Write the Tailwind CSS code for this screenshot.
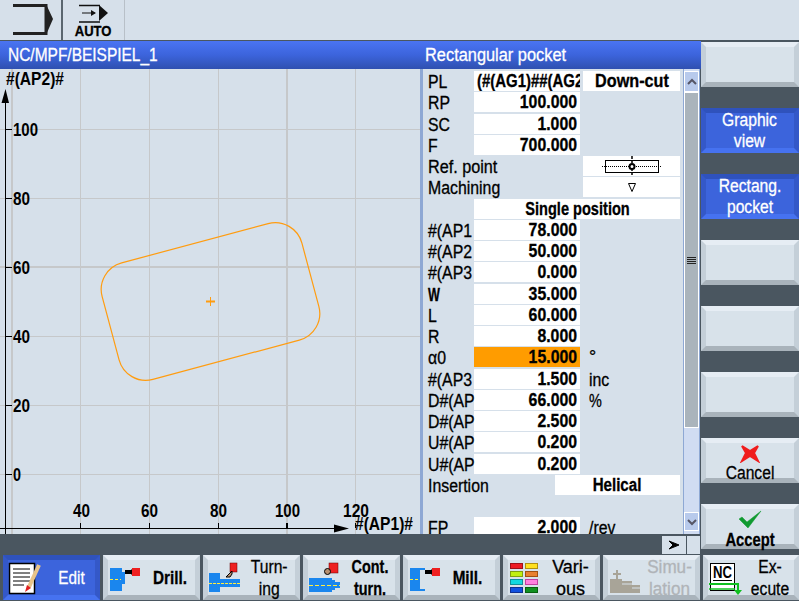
<!DOCTYPE html>
<html lang="en">
<head>
  <meta charset="UTF-8" />
  <title>Rectangular pocket</title>
  <script src="https://cdn.jsdelivr.net/npm/@tailwindcss/browser@4"></script>
</head>
<body class="w-[799px] h-[601px] overflow-hidden bg-[#4a5660] text-black text-[18px] leading-[20px] font-['Liberation_Sans',sans-serif] [-webkit-text-stroke:0.3px]">

  <!-- top bar -->
  <div class="h-[41px] flex bg-[#d6e0ea] border-b border-[#4a5660]">
    <div class="w-[63px] border-r-2 border-[#5a666f] flex items-center">
      <svg width="60" height="40"><path d="M13 5.5H46V33.5H13" fill="none" stroke="#222" stroke-width="3"/><path d="M46 4L53 19L46 35Z" fill="#222"/></svg>
    </div>
    <div class="w-[62px] border-r border-[#b8c0c8] flex flex-col items-center">
      <svg width="41" height="24" class="shrink-0"><path d="M6 5.5H27M6 22H27" stroke="#111" stroke-width="1.5"/><path d="M9 13H22" stroke="#111"/><path d="M18 10L23 13L18 16Z" fill="#111"/><path d="M26 5L35 13L26 21Z" fill="#111"/></svg>
      <span class="inline-block scale-x-[.87] text-[15px] leading-[14px] font-bold whitespace-nowrap">AUTO</span>
    </div>
  </div>

  <div class="flex h-[514px]">
    <div class="w-[701px] flex flex-col">
      <!-- titles -->
      <div class="flex h-[28px] text-white leading-[28px] bg-gradient-to-b from-[#4a74f2] via-[#3c64dc] to-[#2f50b0]">
        <div class="w-[420px] pl-[8px]"><span class="inline-block scale-x-[.86] origin-left whitespace-nowrap">NC/MPF/BEISPIEL_1</span></div>
        <div class="pl-[5px]"><span class="inline-block scale-x-[.91] origin-left whitespace-nowrap">Rectangular pocket</span></div>
      </div>

      <div class="flex h-[465px] bg-[#d6e0ea]">
        <!-- graphic view -->
        <div class="w-[420px] relative overflow-hidden">
          <svg width="420" height="465" viewBox="0 69 420 465" class="absolute inset-0 font-bold" font-size="18">
            <g stroke="#c6c8ca" fill="none">
              <path d="M12 69V534" stroke-width="2"/>
              <path d="M80.5 69V534M149.5 69V534M218.5 69V534M355.5 69V534"/>
              <path d="M287 69V534" stroke-width="2"/>
              <path d="M0 129.5H420M0 198.5H420M0 336.5H420M0 405.5H420M0 474.5H420"/>
              <path d="M0 267H420" stroke-width="2"/>
            </g>
            <g transform="translate(210.5 301.5) rotate(-15)">
              <rect x="-103.4" y="-60.3" width="206.8" height="120.6" rx="27.6" fill="none" stroke="#ff9c10" stroke-width="1.2"/>
            </g>
            <path d="M206 301.5H215" stroke="#ff9c10" stroke-width="2"/>
            <path d="M210.5 297V306" stroke="#ff9c10"/>
            <g stroke="#000" fill="none">
              <path d="M5.5 100V534M0 528.5H338"/>
              <path d="M5 129.5H12M5 198.5H12M5 267.5H12M5 336.5H12M5 405.5H12M5 474.5H12"/>
              <path d="M80.5 523V528M149.5 523V528M218.5 523V528M355.5 523V528"/>
              <path d="M287 523V528" stroke-width="2"/>
            </g>
            <path d="M5.5 89L9 103H1.5Z" fill="#000"/>
            <path d="M349 528.5L334 524.5V532.5Z" fill="#000"/>
            <text x="6" y="85" textLength="58" lengthAdjust="spacingAndGlyphs">#(AP2)#</text>
            <text x="13" y="136" textLength="25" lengthAdjust="spacingAndGlyphs">100</text>
            <text x="13" y="205" textLength="17" lengthAdjust="spacingAndGlyphs">80</text>
            <text x="13" y="274" textLength="17" lengthAdjust="spacingAndGlyphs">60</text>
            <text x="13" y="343" textLength="17" lengthAdjust="spacingAndGlyphs">40</text>
            <text x="13" y="412" textLength="17" lengthAdjust="spacingAndGlyphs">20</text>
            <text x="13" y="481" textLength="8" lengthAdjust="spacingAndGlyphs">0</text>
            <text x="73" y="517" textLength="17" lengthAdjust="spacingAndGlyphs">40</text>
            <text x="141" y="517" textLength="17" lengthAdjust="spacingAndGlyphs">60</text>
            <text x="210" y="517" textLength="17" lengthAdjust="spacingAndGlyphs">80</text>
            <text x="275" y="517" textLength="25" lengthAdjust="spacingAndGlyphs">100</text>
            <text x="343" y="517" textLength="26" lengthAdjust="spacingAndGlyphs">120</text>
            <text x="355" y="530" textLength="58" lengthAdjust="spacingAndGlyphs">#(AP1)#</text>
          </svg>
        </div>

        <!-- parameter form -->
        <div class="w-[263px] h-[465px] overflow-hidden border-l-[3px] border-[#8ea8d4] pt-[2px] pr-[3px]">
          <div class="flex h-[21.26px]"><span class="w-[51px] pl-[5px] pt-px"><span class="inline-block scale-x-[.88] origin-left whitespace-nowrap">PL</span></span><span class="w-[106px] h-5 bg-white pl-[3px] overflow-hidden whitespace-nowrap font-bold"><span class="inline-block scale-x-[.83] origin-left">(#(AG1)##(AG2</span></span><span class="w-[97px] h-5 ml-[3px] bg-white text-center font-bold"><span class="inline-block scale-x-[.9]">Down-cut</span></span></div>
          <div class="flex h-[21.26px]"><span class="w-[51px] pl-[5px] pt-px"><span class="inline-block scale-x-[.88] origin-left whitespace-nowrap">RP</span></span><span class="w-[106px] h-5 bg-white pr-[3px] text-right font-bold"><span class="inline-block scale-x-[.88] origin-right">100.000</span></span></div>
          <div class="flex h-[21.26px]"><span class="w-[51px] pl-[5px] pt-px"><span class="inline-block scale-x-[.88] origin-left whitespace-nowrap">SC</span></span><span class="w-[106px] h-5 bg-white pr-[3px] text-right font-bold"><span class="inline-block scale-x-[.88] origin-right">1.000</span></span></div>
          <div class="flex h-[21.26px]"><span class="w-[51px] pl-[5px] pt-px"><span class="inline-block scale-x-[.88] origin-left whitespace-nowrap">F</span></span><span class="w-[106px] h-5 bg-white pr-[3px] text-right font-bold"><span class="inline-block scale-x-[.88] origin-right">700.000</span></span></div>
          <div class="flex h-[21.26px]"><span class="flex-1 pl-[5px] pt-px"><span class="inline-block scale-x-[.9] origin-left whitespace-nowrap">Ref. point</span></span><span class="w-[97px] h-5 bg-white flex items-center justify-center"><svg width="60" height="20"><rect x="3.5" y="4.5" width="53" height="12" fill="none" stroke="#000"/><path d="M0 10.5H60" stroke="#000" stroke-dasharray="1 1"/><path d="M30 0V20" stroke="#000" stroke-width="1.5" stroke-dasharray="3 1"/><circle cx="30" cy="10.5" r="2.5" fill="#fff" stroke="#000" stroke-width="2"/></svg></span></div>
          <div class="flex h-[21.26px]"><span class="flex-1 pl-[5px] pt-px"><span class="inline-block scale-x-[.88] origin-left whitespace-nowrap">Machining</span></span><span class="w-[97px] h-5 bg-white flex items-center justify-center"><svg width="10" height="12"><path d="M1.5 2.5H8.5L5 10.5Z" fill="none" stroke="#000"/></svg></span></div>
          <div class="flex h-[21.26px]"><span class="w-[51px]"></span><span class="w-[206px] h-5 bg-white text-center font-bold"><span class="inline-block scale-x-[.81] whitespace-nowrap">Single position</span></span></div>
          <div class="flex h-[21.26px]"><span class="w-[51px] pl-[5px] pt-px"><span class="inline-block scale-x-[.88] origin-left whitespace-nowrap">#(AP1</span></span><span class="w-[106px] h-5 bg-white pr-[3px] text-right font-bold"><span class="inline-block scale-x-[.88] origin-right">78.000</span></span></div>
          <div class="flex h-[21.26px]"><span class="w-[51px] pl-[5px] pt-px"><span class="inline-block scale-x-[.88] origin-left whitespace-nowrap">#(AP2</span></span><span class="w-[106px] h-5 bg-white pr-[3px] text-right font-bold"><span class="inline-block scale-x-[.88] origin-right">50.000</span></span></div>
          <div class="flex h-[21.26px]"><span class="w-[51px] pl-[5px] pt-px"><span class="inline-block scale-x-[.88] origin-left whitespace-nowrap">#(AP3</span></span><span class="w-[106px] h-5 bg-white pr-[3px] text-right font-bold"><span class="inline-block scale-x-[.88] origin-right">0.000</span></span></div>
          <div class="flex h-[21.26px]"><span class="w-[51px] pl-[5px] pt-px font-bold"><span class="inline-block scale-x-[.7] origin-left whitespace-nowrap">W</span></span><span class="w-[106px] h-5 bg-white pr-[3px] text-right font-bold"><span class="inline-block scale-x-[.88] origin-right">35.000</span></span></div>
          <div class="flex h-[21.26px]"><span class="w-[51px] pl-[5px] pt-px"><span class="inline-block scale-x-[.88] origin-left whitespace-nowrap">L</span></span><span class="w-[106px] h-5 bg-white pr-[3px] text-right font-bold"><span class="inline-block scale-x-[.88] origin-right">60.000</span></span></div>
          <div class="flex h-[21.26px]"><span class="w-[51px] pl-[5px] pt-px"><span class="inline-block scale-x-[.88] origin-left whitespace-nowrap">R</span></span><span class="w-[106px] h-5 bg-white pr-[3px] text-right font-bold"><span class="inline-block scale-x-[.88] origin-right">8.000</span></span></div>
          <div class="flex h-[21.26px]"><span class="w-[51px] pl-[5px] pt-px"><span class="inline-block scale-x-[.88] origin-left whitespace-nowrap">α0</span></span><span class="w-[106px] h-5 bg-[#ff9c00] pr-[3px] text-right font-bold"><span class="inline-block scale-x-[.88] origin-right">15.000</span></span><span class="pl-[9px]">°</span></div>
          <div class="flex h-[21.26px]"><span class="w-[51px] pl-[5px] pt-px"><span class="inline-block scale-x-[.88] origin-left whitespace-nowrap">#(AP3</span></span><span class="w-[106px] h-5 bg-white pr-[3px] text-right font-bold"><span class="inline-block scale-x-[.88] origin-right">1.500</span></span><span class="pl-[9px] pt-px"><span class="inline-block scale-x-[.88] origin-left">inc</span></span></div>
          <div class="flex h-[21.26px]"><span class="w-[51px] pl-[5px] pt-px"><span class="inline-block scale-x-[.88] origin-left whitespace-nowrap">D#(AP</span></span><span class="w-[106px] h-5 bg-white pr-[3px] text-right font-bold"><span class="inline-block scale-x-[.88] origin-right">66.000</span></span><span class="pl-[9px] pt-px"><span class="inline-block scale-x-[.8] origin-left">%</span></span></div>
          <div class="flex h-[21.26px]"><span class="w-[51px] pl-[5px] pt-px"><span class="inline-block scale-x-[.88] origin-left whitespace-nowrap">D#(AP</span></span><span class="w-[106px] h-5 bg-white pr-[3px] text-right font-bold"><span class="inline-block scale-x-[.88] origin-right">2.500</span></span></div>
          <div class="flex h-[21.26px]"><span class="w-[51px] pl-[5px] pt-px"><span class="inline-block scale-x-[.88] origin-left whitespace-nowrap">U#(AP</span></span><span class="w-[106px] h-5 bg-white pr-[3px] text-right font-bold"><span class="inline-block scale-x-[.88] origin-right">0.200</span></span></div>
          <div class="flex h-[21.26px]"><span class="w-[51px] pl-[5px] pt-px"><span class="inline-block scale-x-[.88] origin-left whitespace-nowrap">U#(AP</span></span><span class="w-[106px] h-5 bg-white pr-[3px] text-right font-bold"><span class="inline-block scale-x-[.88] origin-right">0.200</span></span></div>
          <div class="flex h-[21.26px]"><span class="flex-1 pl-[5px] pt-px"><span class="inline-block scale-x-[.88] origin-left whitespace-nowrap">Insertion</span></span><span class="w-[125px] h-5 bg-white text-center font-bold"><span class="inline-block scale-x-[.84]">Helical</span></span></div>
          <div class="h-[21.26px]"></div>
          <div class="flex h-[21.26px]"><span class="w-[51px] pl-[5px] pt-px"><span class="inline-block scale-x-[.88] origin-left whitespace-nowrap">FP</span></span><span class="w-[106px] h-5 bg-white pr-[3px] text-right font-bold"><span class="inline-block scale-x-[.88] origin-right">2.000</span></span><span class="pl-[9px] pt-px"><span class="inline-block scale-x-[.88] origin-left">/rev</span></span></div>
        </div>

        <!-- scrollbar -->
        <div class="w-[17px] h-[465px] flex flex-col border-x border-[#8ea8d4] bg-[#d0dcf2]">
          <div class="h-[21px] mt-[2px] bg-[#b8caec] border border-white flex items-center justify-center"><svg width="10" height="8"><path d="M1 6L5 2L9 6" fill="none" stroke="#556" stroke-width="2"/></svg></div>
          <div class="h-[336px] bg-[#aab4bc] border border-white flex items-center justify-center"><svg width="11" height="9"><path d="M1 1.5H10M1 3.5H10M1 5.5H10M1 7.5H10" stroke="#222"/></svg></div>
          <div class="h-[84px]"></div>
          <div class="h-[19px] bg-[#b8caec] border border-white flex items-center justify-center"><svg width="10" height="8"><path d="M1 2L5 6L9 2" fill="none" stroke="#556" stroke-width="2"/></svg></div>
        </div>
        <div class="w-px bg-[#4a5660]"></div>
      </div>

      <!-- status line -->
      <div class="h-[21px] flex justify-end items-start pt-[2px] pr-[1px] gap-px">
        <div class="w-[24px] h-[18px] bg-[#d6e0ea] flex items-center justify-center"><svg width="12" height="10"><path d="M1 1L11 5L1 9L5 5Z" fill="#000" stroke="#000"/></svg></div>
        <div class="w-[13px] h-[18px] bg-[#d6e0ea]"></div>
      </div>
    </div>

    <!-- vertical softkeys -->
    <div class="w-[98px] flex flex-col gap-[21px] pt-px leading-[21px] text-center">
      <div class="h-[45px] box-border border-[5px] border-t-[#e6edf4] border-x-[#c4cfd8] border-b-[#a9b3bb] bg-[#d8e2ea]"></div>
      <div class="h-[45px] box-border border-[5px] border-t-[#2f52bc] border-x-[#3458c8] border-b-[#4672f0] bg-[#3c64dc] text-white flex items-center justify-center"><span class="inline-block scale-x-[.87]">Graphic<br>view</span></div>
      <div class="h-[45px] box-border border-[5px] border-t-[#2f52bc] border-x-[#3458c8] border-b-[#4672f0] bg-[#3c64dc] text-white flex items-center justify-center"><span class="inline-block scale-x-[.87]">Rectang.<br>pocket</span></div>
      <div class="h-[45px] box-border border-[5px] border-t-[#e6edf4] border-x-[#c4cfd8] border-b-[#a9b3bb] bg-[#d8e2ea]"></div>
      <div class="h-[45px] box-border border-[5px] border-t-[#e6edf4] border-x-[#c4cfd8] border-b-[#a9b3bb] bg-[#d8e2ea]"></div>
      <div class="h-[45px] box-border border-[5px] border-t-[#e6edf4] border-x-[#c4cfd8] border-b-[#a9b3bb] bg-[#d8e2ea]"></div>
      <div class="h-[45px] box-border border-[5px] border-t-[#e6edf4] border-x-[#c4cfd8] border-b-[#a9b3bb] bg-[#d8e2ea] flex flex-col items-center">
        <svg width="22" height="20" class="shrink-0"><path d="M3 3L11 8L19 3L15 10L19 18L11 13L3 18L7 10Z" fill="#f01c1c" stroke="#f01c1c" stroke-width="2"/></svg>
        <span class="inline-block scale-x-[.87] leading-[18px] mt-px">Cancel</span>
      </div>
      <div class="h-[45px] box-border border-[5px] border-t-[#e6edf4] border-x-[#c4cfd8] border-b-[#a9b3bb] bg-[#d8e2ea] flex flex-col items-center">
        <svg width="26" height="20" class="shrink-0"><path d="M2 10L5 8L10 13L24 2L11 19Z" fill="#109a30" stroke="#109a30" stroke-width="0.5"/></svg>
        <span class="inline-block scale-x-[.82] leading-[18px] font-bold mt-[2px]">Accept</span>
      </div>
    </div>
  </div>

  <!-- horizontal softkeys -->
  <div class="flex h-[46px] gap-[3px] pl-[3px] leading-[22px] text-center">
    <div class="w-[97px] h-[45px] box-border border-[5px] border-t-[#2f52bc] border-x-[#3458c8] border-b-[#4672f0] bg-[#3c64dc] text-white flex items-center">
      <svg width="33" height="35" class="shrink-0"><rect x="1.5" y="3.5" width="25" height="30" fill="#fff" stroke="#000" stroke-width="1.5"/><path d="M5 9H22M5 13H22M5 17H22M5 21H22M5 25H16" stroke="#000"/><path d="M31 5L21 27" stroke="#e8c48a" stroke-width="4"/><path d="M19 25L17 32L23 28Z" fill="#e02020"/></svg>
      <span class="inline-block scale-x-[.85] ml-[15px]">Edit</span>
    </div>
    <div class="w-[97px] h-[45px] box-border border-[5px] border-t-[#e6edf4] border-x-[#c4cfd8] border-b-[#a9b3bb] bg-[#d8e2ea] flex items-center">
      <svg width="32" height="35" class="shrink-0"><path d="M2 8H14V12H17V24H14V31H2Z" fill="#1a86ee"/><path d="M2 19.5H13" stroke="#ffee40" stroke-dasharray="3 2"/><path d="M17 10H23L25 8V16L23 14H17Z" fill="#000"/><rect x="24" y="8" width="8" height="8" fill="#ee2020"/></svg>
      <span class="inline-block scale-x-[.85] ml-[10px] font-bold">Drill.</span>
    </div>
    <div class="w-[97px] h-[45px] box-border border-[5px] border-t-[#e6edf4] border-x-[#c4cfd8] border-b-[#a9b3bb] bg-[#d8e2ea] flex items-center">
      <svg width="36" height="35" class="shrink-0"><path d="M1 13H12V19H32V27H12V32H1Z" fill="#1a86ee"/><path d="M1 23.5H32" stroke="#ffee40" stroke-dasharray="3 1"/><rect x="22" y="3" width="7" height="9" fill="#ee2020" stroke="#600" stroke-width="0.5"/><path d="M18 17L24 11V14L22 17Z" fill="#b89070" stroke="#000" stroke-width="1"/></svg>
      <span class="flex-1"><span class="inline-block scale-x-[.87]">Turn-<br>ing</span></span>
    </div>
    <div class="w-[97px] h-[45px] box-border border-[5px] border-t-[#e6edf4] border-x-[#c4cfd8] border-b-[#a9b3bb] bg-[#d8e2ea] flex items-center">
      <svg width="36" height="35" class="shrink-0"><path d="M1 18H24V20H27V22H32V28H27V30H24V32H1Z" fill="#1a86ee"/><path d="M1 25.5H32" stroke="#ffee40" stroke-dasharray="4 2"/><rect x="21" y="3" width="9" height="10" fill="#ee2020" stroke="#600" stroke-width="0.5"/><circle cx="19.5" cy="11.5" r="3" fill="#b89070" stroke="#000" stroke-width="1"/></svg>
      <span class="flex-1 font-bold"><span class="inline-block scale-x-[.8]">Cont.<br>turn.</span></span>
    </div>
    <div class="w-[97px] h-[45px] box-border border-[5px] border-t-[#e6edf4] border-x-[#c4cfd8] border-b-[#a9b3bb] bg-[#d8e2ea] flex items-center">
      <svg width="32" height="35" class="shrink-0"><path d="M2 8H17V10H12V29H17V31H2Z" fill="#1a86ee"/><path d="M2 19.5H12" stroke="#ffee40" stroke-dasharray="3 2"/><path d="M17 10H23L25 8V16L23 14H17Z" fill="#000"/><rect x="24" y="8" width="8" height="8" fill="#ee2020"/></svg>
      <span class="inline-block scale-x-[.85] ml-[10px] font-bold">Mill.</span>
    </div>
    <div class="w-[97px] h-[45px] box-border border-[5px] border-t-[#e6edf4] border-x-[#c4cfd8] border-b-[#a9b3bb] bg-[#d8e2ea] flex items-center">
      <div class="grid grid-cols-[13px_13px] gap-x-[2px] gap-y-[2px] ml-[2px] shrink-0">
        <div class="h-[6px] bg-[#ee1c24] border border-[#a01018]"></div><div class="h-[6px] bg-[#ffe020] border border-[#b09010]"></div>
        <div class="h-[6px] bg-[#c0f010] border border-[#80a010]"></div><div class="h-[6px] bg-[#e88030] border border-[#a05010]"></div>
        <div class="h-[6px] bg-[#10d8e0] border border-[#109098]"></div><div class="h-[6px] bg-[#ff80e0] border border-[#c040a0]"></div>
        <div class="h-[6px] bg-[#1050e0] border border-[#103090]"></div><div class="h-[6px] bg-[#109020] border border-[#086010]"></div>
      </div>
      <span class="flex-1 pl-[8px]"><span class="inline-block">Vari-<br>ous</span></span>
    </div>
    <div class="w-[97px] h-[45px] box-border border-[5px] border-t-[#e6edf4] border-x-[#c4cfd8] border-b-[#a9b3bb] bg-[#d8e2ea] flex items-center text-[#b0b4b8]">
      <svg width="36" height="35" class="shrink-0"><path d="M2 19H14V21H24V25H32V33H2Z" fill="#a8a498"/><path d="M9 10V19M5 14H13" stroke="#a8a498" stroke-width="2"/><path d="M14 24H32M24 28H32" stroke="#d8e2ea"/></svg>
      <span class="flex-1"><span class="inline-block scale-x-[.95]">Simu-<br>lation</span></span>
    </div>
    <div class="w-[96px] h-[45px] box-border border-[5px] border-t-[#e6edf4] border-x-[#c4cfd8] border-b-[#a9b3bb] bg-[#d8e2ea] flex items-center">
      <svg width="36" height="35" class="shrink-0"><rect x="2.5" y="3.5" width="24" height="27" fill="#fff" stroke="#000"/><text x="5" y="18" font-size="17" font-weight="700" textLength="19" lengthAdjust="spacingAndGlyphs">NC</text><path d="M5 20.5H24" stroke="#000"/><path d="M1 24H30V31" fill="none" stroke="#10c020" stroke-width="2"/><path d="M1 29H27" stroke="#10c020" stroke-width="1.5"/><path d="M26 30H34L30 35Z" fill="#10c020"/></svg>
      <span class="flex-1 pl-[3px]"><span class="inline-block scale-x-[.87]">Ex-<br>ecute</span></span>
    </div>
  </div>
</body>
</html>
